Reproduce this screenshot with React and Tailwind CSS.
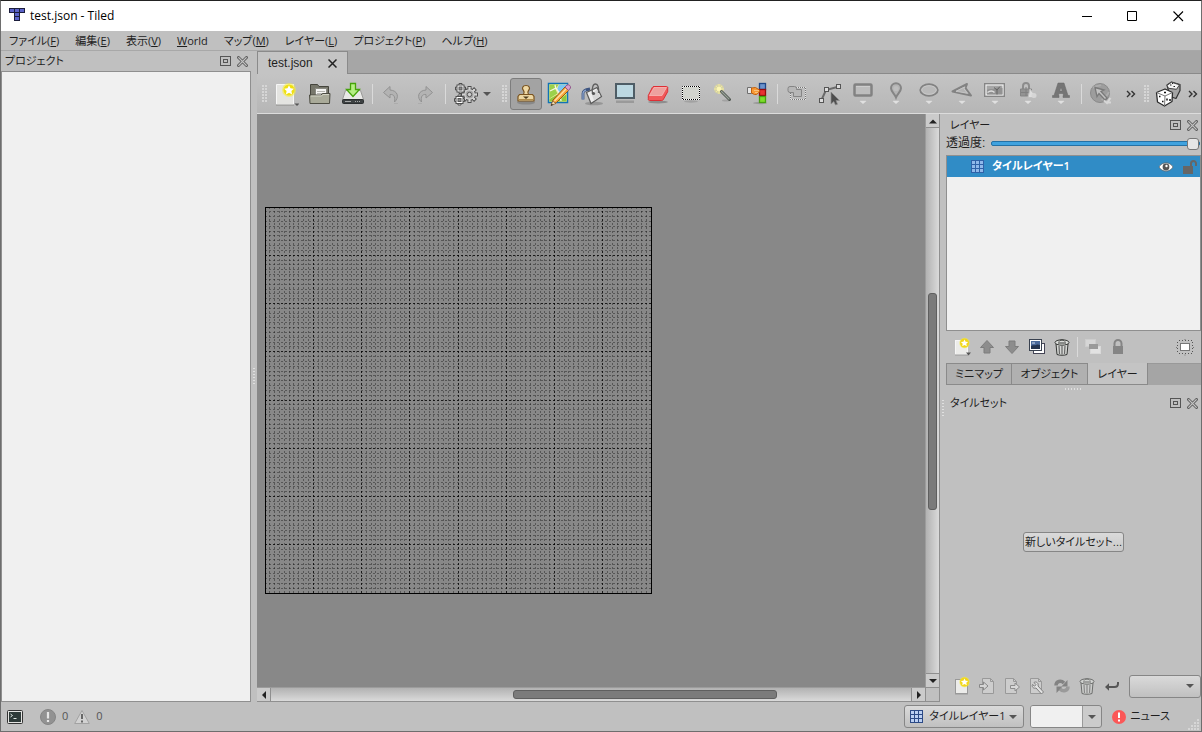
import React from "react";

const svgBase = { xmlns: "http://www.w3.org/2000/svg", "aria-hidden": true };

function Icon({ size = 24, box = 24, children, className = "" }) {
  return (
    <svg {...svgBase} width={size} height={size} viewBox={`0 0 ${box} ${box}`} fill="none" className={`shrink-0 ${className}`}>
      {children}
    </svg>
  );
}

/* ---------- Main toolbar icons (24 px grid) ---------- */

const NewMapIcon = () => (
  <Icon>
    <path d="M1.5 2.5h17v20h-17z" fill="#e4e4e1" stroke="#f6f6f6" />
    <path d="M1 23h18" stroke="#8d8d8a" />
    <circle cx="14" cy="8" r="7" fill="#f7ee3a" opacity=".55" />
    <circle cx="14" cy="8" r="5.500" fill="#f0e010" />
    <path d="M14 3.2l1.5 3.1 3.4.4-2.5 2.3.7 3.4-3.1-1.7-3.1 1.7.7-3.4-2.5-2.3 3.4-.4z" fill="#fff" />
    <path d="M19.500 21.500h5l-2.500 2.500z" fill="#555" />
  </Icon>
);

const OpenIcon = () => (
  <Icon>
    <path d="M2.5 20V2.500h7l1.500 2h9.500V20z" fill="#77776b" stroke="#45453c" />
    <path d="M7.500 6.500h11V17h-11z" fill="#f5f5f3" stroke="#8a8a82" />
    <path d="M9 9.500h8M9 11.500h8" stroke="#b5b5b0" />
    <path d="M2 21.500l-.5-8.500h11.500l1.500-1.500h7.500l-.5 10z" fill="#a9aa99" stroke="#4d4d43" />
    <path d="M3 14h10.500l1.500-1.500h6" stroke="#d2d3c5" />
  </Icon>
);

const SaveIcon = () => (
  <Icon>
    <path d="M4.500 8.500h15l3 9h-21z" fill="#e9e9e7" stroke="#9a9a98" />
    <rect x="1.500" y="17.500" width="21" height="4" rx="1" fill="#3d4142" stroke="#2b2e2f" />
    <path d="M4 19.500h6M14 19.500h1M16 19.500h1M18 19.500h1" stroke="#a6a8a8" />
    <path d="M9.500 1.500h5v6h4l-6.500 7-6.500-7h4z" fill="#b6ef84" stroke="#45a30a" strokeWidth="1.300" />
  </Icon>
);

const UndoShape = () => (
  <>
    <path d="M11 4.500L4.500 10.500l6.500 5.500v-3.500c3.500-.3 5.500 1.500 4.500 7.500 5-4.500 3.500-11.500-4.500-12z" fill="#b3b3b3" stroke="#929292" />
    <path d="M15 21.500h4" stroke="#acacac" />
  </>
);
const UndoIcon = () => <Icon><UndoShape /></Icon>;
const RedoIcon = () => <Icon><g transform="translate(25 0) scale(-1 1)"><UndoShape /></g></Icon>;

const SmallCog = ({ x, y }) => (
  <g transform={`translate(${x} ${y})`}>
    <path d="M-1.500-5h3v10h-3zM-5-1.500h10v3H-5z" fill="#e9e9e9" stroke="#4f4f4f" />
    <rect x="-3.500" y="-3.500" width="7" height="7" fill="#fff" stroke="#4f4f4f" />
    <rect x="-1.500" y="-1.500" width="3" height="3" fill="#8c8c8c" stroke="#5a5a5a" />
  </g>
);

const GearsIcon = () => (
  <Icon>
    <g transform="translate(15.500 12.500)">
      {[0, 45, 90, 135].map((a) => (
        <rect key={a} x="-1.500" y="-8" width="3" height="16" fill="#d4d4d4" stroke="#4c4c4c" transform={`rotate(${a})`} />
      ))}
      <circle r="5.800" fill="#cfcfcf" stroke="#4c4c4c" />
      {[0, 45, 90, 135].map((a) => (
        <rect key={a} x="-1" y="-7.300" width="2" height="14.600" fill="#d4d4d4" transform={`rotate(${a})`} />
      ))}
      <circle r="4" fill="#a6a6a6" />
      <circle r="2.200" fill="#cfcfcf" stroke="#555" />
    </g>
    <SmallCog x={6.500} y={6.500} />
    <SmallCog x={5.500} y={18} />
  </Icon>
);

const StampIcon = () => (
  <Icon>
    <ellipse cx="12" cy="20.500" rx="9" ry="2" fill="#6e6e6e" opacity=".5" />
    <path d="M12 3.500c-3.500 0-4.500 3-2.500 5 1 1.200.8 2.500 0 4H14.500c-.8-1.500-1-2.800 0-4 2-2 1-5-2.500-5z" fill="#efd9a5" stroke="#7a5420" strokeWidth="1.200" />
    <path d="M5.500 12.500h13l1.500 2v4.500H4v-4.500z" fill="#ecd6a2" stroke="#7a5420" strokeWidth="1.200" />
    <path d="M5 17.500h14" stroke="#b08c4c" />
    <path d="M9 14.500h6l-3 2.500z" fill="#4d3b1c" />
  </Icon>
);

const TerrainIcon = () => (
  <Icon>
    <rect x="1.500" y="1.500" width="19" height="19" fill="#f5eda2" stroke="#1173b5" strokeWidth="1.500" />
    <path d="M2.500 2.500h9l-3 5 2 4-8 5z" fill="#9bd14c" />
    <path d="M12 2.500h8v10l-4-2-4 2-2-5z" fill="#7cc8f2" />
    <path d="M2.500 17l7-4 5 3 5-4v7.500h-17z" fill="#8fc93e" />
    <path d="M3 9l6-3 4 6 1 7M8 3l1 4" stroke="#f8f6e6" strokeWidth="1.300" />
    <path d="M4.500 23l1.500-5L18 5l3.500 3.500L9.500 20.500z" fill="#f6a63c" stroke="#9a5a12" />
    <path d="M7.500 19L19 7" stroke="#fde0a8" strokeWidth="1.300" />
    <path d="M18 5l2-2c2-.8 4 1 3.500 3l-2 2.500z" fill="#d9a0cb" stroke="#92588c" />
    <path d="M4 23.500l1.700-4.500 3.200 2.500z" fill="#f2dcb4" stroke="#6b4a20" strokeWidth=".6" />
    <path d="M3.800 23.800l1-2 1.200 1.200z" fill="#222" />
  </Icon>
);

const BucketIcon = () => (
  <Icon>
    <ellipse cx="14" cy="21.500" rx="9" ry="1.800" fill="#7e7e7e" opacity=".6" />
    <path d="M3 17.500v-6c0-2.500 1.500-3.500 7-4.500" stroke="#3e5580" strokeWidth="2.800" />
    <path d="M3 17.500v-6c0-2 1.500-3 3-3.500" stroke="#90a8d0" strokeWidth="1.200" />
    <path d="M6.500 10.500L17 5.500l4.500 9L11 21.500z" fill="#ececec" stroke="#5b5b5b" strokeWidth="1.200" />
    <path d="M12 13l4.500-5.500 3.500 7-6 4z" fill="#d6d6d6" />
    <path d="M12.500 11.500c-1-5 .5-9.500 3-9.500s3.500 3.500 3 9" stroke="#606060" strokeWidth="1.300" />
    <circle cx="13.500" cy="11.500" r="1.600" fill="#555" />
  </Icon>
);

const ShapeFillIcon = () => (
  <Icon>
    <rect x="3" y="18.500" width="18" height="2.500" fill="#9a9a9a" />
    <path d="M2 1h20v16H2z" fill="#4e5d66" />
    <path d="M4 3h16v12H4z" fill="#bcd8e2" />
  </Icon>
);

const EraserIcon = () => (
  <Icon>
    <ellipse cx="12" cy="20" rx="10" ry="1.500" fill="#8d8d8d" />
    <path d="M8 4.500h12.500c1 0 1.500.8 1.200 1.700v3.500l-4.500 8c-.4.600-.8.800-1.500.8H3.500c-1 0-1.500-.8-1.200-1.700V13.500l4-8c.4-.7.900-1 1.700-1z" fill="#f05a5a" stroke="#dd2f35" />
    <path d="M8 5.500h12.500l-4.500 8H3.500z" fill="#eda19e" stroke="#f7bab7" strokeWidth=".8" />
  </Icon>
);

const SelectIcon = () => (
  <Icon>
    <ellipse cx="12" cy="19.500" rx="7" ry="1.200" fill="#a2a2a2" />
    <rect x="3.500" y="4.500" width="17" height="13" fill="#d2d4ce" stroke="#fff" />
    <rect x="3.500" y="4.500" width="17" height="13" stroke="#000" strokeDasharray="1 1" strokeDashoffset=".5" />
  </Icon>
);

const WandIcon = () => (
  <Icon>
    <ellipse cx="14" cy="18.500" rx="4" ry="1" fill="#a2a2a2" />
    <circle cx="7" cy="7" r="5" fill="#f3ea86" opacity=".45" />
    <path d="M7 2v10M2 7h10M4 4l6 6M10 4l-6 6" stroke="#f5ef9c" strokeWidth=".8" />
    <circle cx="7" cy="7" r="2.300" fill="#fbf6b4" />
    <path d="M9.500 9.500l8 8" stroke="#4d544e" strokeWidth="3" strokeLinecap="round" />
    <path d="M9.500 9.500l7.500 7.500" stroke="#97a097" strokeWidth="1.200" strokeLinecap="round" />
  </Icon>
);

const SameTileIcon = () => (
  <Icon>
    <ellipse cx="15" cy="21" rx="7" ry="1.200" fill="#9a9a9a" />
    <rect x="14.500" y="1.500" width="6" height="6" fill="#6b93cc" stroke="#1f4787" strokeWidth="1.300" />
    <rect x="14.500" y="7.500" width="6" height="6" fill="#e83232" stroke="#950c0c" strokeWidth="1.300" />
    <rect x="14.500" y="14.500" width="6" height="6" fill="#7ede2c" stroke="#47a010" strokeWidth="1.300" />
    <path d="M2.500 5.500h4v6h-4z" fill="#e6e6e6" stroke="#6f6f6f" />
    <path d="M6.500 6l4-.5 4 2.500v2l-3 2.500h-2L6.500 11z" fill="#f79a36" stroke="#c25f0c" />
    <path d="M9 8.500h5M10 10.500h3" stroke="#fbc07a" />
  </Icon>
);

const ObjectSelectIcon = () => (
  <Icon>
    <rect x="5.500" y="5.500" width="15" height="12" fill="#bdbdbd" stroke="#e4e4e4" />
    <rect x="5.500" y="5.500" width="15" height="12" stroke="#777" strokeDasharray="1 1" strokeDashoffset=".5" />
    <rect x="3" y="4.500" width="8.500" height="6" rx="2" fill="#b7b7b7" stroke="#858585" />
    <path d="M11.500 7.500h5v7h-8v-4" fill="#b7b7b7" stroke="#858585" />
  </Icon>
);

const EditPolygonIcon = () => (
  <Icon>
    <path d="M3 19L8 8l13-3.500" stroke="#6b6b6b" strokeWidth="2" />
    <rect x="1.500" y="16.500" width="4" height="4" fill="#dcdcdc" stroke="#555" />
    <rect x="6.500" y="5.500" width="4" height="4" fill="#dcdcdc" stroke="#555" />
    <rect x="18.500" y="2.500" width="4" height="4" fill="#dcdcdc" stroke="#555" />
    <path d="M13 10v12l2.800-2.500L17.500 23l2-.8-1.500-3.700h3.500z" fill="#4e4e4e" stroke="#8d8d8d" strokeWidth=".7" />
  </Icon>
);

function InsertIcon({ children }) {
  return (
    <Icon>
      <g transform="translate(0 -2)">{children}</g>
      <path d="M8 18.500h8" stroke="#a5a5a5" />
      <path d="M8 18.500h8L12 22z" fill="#e0e0e0" />
    </Icon>
  );
}

const InsertRectIcon = () => (
  <InsertIcon>
    <rect x="3.500" y="4.500" width="17" height="11" rx="1" fill="#bdbdbd" stroke="#828282" strokeWidth="2.500" />
    <path d="M5 6.500h14" stroke="#cdcdcd" />
  </InsertIcon>
);
const InsertPointIcon = () => (
  <InsertIcon>
    <path d="M12 17.500C10.500 13.500 7 11.500 7 8.300a5 5 0 0 1 10 0c0 3.200-3.500 5.200-5 9.200z" fill="#b4b4b4" stroke="#858585" strokeWidth="2" />
    <circle cx="12" cy="8.500" r="2.600" fill="#bebebe" />
  </InsertIcon>
);
const InsertEllipseIcon = () => (
  <InsertIcon>
    <ellipse cx="12" cy="10" rx="8.700" ry="5.700" fill="#bababa" stroke="#828282" strokeWidth="2" />
    <ellipse cx="12" cy="10" rx="7.300" ry="4.300" stroke="#cacaca" />
  </InsertIcon>
);
const InsertPolygonIcon = () => (
  <InsertIcon>
    <path d="M2.500 11.500L17 4l-1.500 4 5.500 7.500z" fill="#b4b4b4" stroke="#828282" strokeWidth="2" strokeLinejoin="round" />
    <path d="M6 11.300l9-4.500-1 2 3.500 4.500z" stroke="#cacaca" strokeWidth=".8" />
  </InsertIcon>
);
const InsertImageIcon = () => (
  <InsertIcon>
    <rect x="1.500" y="3.500" width="20" height="13" fill="#8e8e8e" stroke="#858585" />
    <rect x="3" y="5" width="17" height="10" fill="#a6a6a6" stroke="#efefef" strokeWidth="1.200" />
    <path d="M4 10c3-2 5 0 7.500-1.500s5-1.500 8-.5v6.500h-15.500z" fill="#929292" />
    <path d="M14 14.500V10l-3-2.500M14 10l3-3.500" stroke="#646464" />
    <path d="M4.500 12.500c2-1.500 5-2 7 0" stroke="#dedede" strokeWidth="1.500" />
  </InsertIcon>
);
const InsertTemplateIcon = () => (
  <InsertIcon>
    <path d="M7 9V6a3 3 0 0 1 6 0v3" stroke="#8c8c8c" strokeWidth="2" />
    <path d="M4.500 9h11v7h-11z" fill="#939393" stroke="#858585" />
    <path d="M10 7v9M5 12.500h10" stroke="#808080" />
    <path d="M14 9l4 5v3.500H12z" fill="#dedede" stroke="#c0c0c0" />
    <circle cx="18" cy="15.500" r="2.500" fill="#d6d6d6" />
  </InsertIcon>
);
const InsertTextIcon = () => (
  <InsertIcon>
    <path d="M9 3h6l4 12.500h1.500v2h-6.500v-2h.6l-.6-2h-4l-.6 2h.6v2H3.500v-2H5zM12 7.500l-1.300 3.500h2.600z" fill="#757575" fillRule="evenodd" stroke="#666" strokeWidth=".5" />
  </InsertIcon>
);
const WorldIcon = () => (
  <Icon>
    <circle cx="11" cy="11" r="9.500" fill="#9d9d9d" stroke="#8a8a8a" />
    <path d="M4 6c3-3 5-1 8-3M13 18c2-4 5-3 7-8" stroke="#adadad" strokeWidth="2" />
    <path d="M6 5.500l9 2.500-3 1.500 6 6.500-2 2-6-6.500L8 14.500z" fill="#c2c2c2" stroke="#7a7a7a" strokeWidth="1.300" />
    <path d="M15 18.500l3 2.500 3.500-5M17.500 20.500h4.500" stroke="#d6d6d6" strokeWidth="2" />
  </Icon>
);
const DiceIcon = () => (
  <Icon size={26} box={26}>
    <path d="M12 4l4.500-3 8.500 2.500v6l-4 8-6-2z" fill="#a4a4a4" stroke="#333" strokeWidth="1.200" strokeLinejoin="round" />
    <path d="M12 4.300l4.500-3 8 2.500-3 4.500-8-1z" fill="#f4f4f4" stroke="#444" />
    <path d="M15 4h1.500M18.500 5.500H20M17 2.500h1" stroke="#222" strokeWidth="1.200" />
    <path d="M1.500 11.500L10 8l7.500 3.500-.5 9-7.500 4.500-7-4z" fill="#fff" stroke="#2c2c2c" strokeWidth="1.300" strokeLinejoin="round" />
    <path d="M1.500 11.500l8.500 3.500 7.500-3.500M10 15l-.5 10" stroke="#777" />
    <path d="M9 11.500h2M4 15.500h1.500M7 20.500h1.500M12 17.500v2M15 18v2" stroke="#111" strokeWidth="1.500" />
  </Icon>
);

/* ---------- Dock icons (20 px grid) ---------- */

const Star = ({ x, y }) => (
  <g transform={`translate(${x} ${y})`}>
    <circle r="5.200" fill="#f7ee3a" opacity=".6" />
    <circle r="4.500" fill="#f2d71a" />
    <path d="M0-3.500l1.100 2.200 2.500.3-1.800 1.700.5 2.500L0 2-2.300 3.200l.5-2.500L-3.600-1l2.500-.3z" fill="#fff" />
  </g>
);

const DocNewIcon = ({ arrow }) => (
  <Icon size={20} box={20}>
    <rect x="3.500" y="3.500" width="12" height="14" fill="#ececea" stroke={arrow ? "#f6f6f6" : "#999"} />
    <path d="M3 18h13" stroke="#999" />
    <Star x={12.500} y={6} />
    {arrow && <path d="M14 15.500h5l-2.500 3z" fill="#555" />}
  </Icon>
);
const UpShape = () => (
  <path d="M10 3.500l6.500 7H13v5.500H7v-5.500H3.500z" fill="#8d8d8d" stroke="#7d7d7d" strokeLinejoin="round" />
);
const UpIcon = () => <Icon size={20} box={20}><UpShape /></Icon>;
const DownIcon = () => <Icon size={20} box={20}><g transform="translate(0 20) scale(1 -1)"><UpShape /></g></Icon>;
const DuplicateIcon = () => (
  <Icon size={20} box={20}>
    <rect x="6.500" y="6.500" width="11" height="10" fill="#fff" stroke="#445" />
    <rect x="2.500" y="2.500" width="12" height="11" fill="#fff" stroke="#39414f" />
    <rect x="4" y="4" width="9" height="8" fill="#4a6a9c" />
    <path d="M4 9c2-1.500 3 0 5-1s3 0 4 0v4H4z" fill="#23334f" />
    <path d="M5 6h3" stroke="#cfdcf0" />
  </Icon>
);
const TrashIcon = ({ dim }) => (
  <Icon size={20} box={20} className={dim ? "opacity-60" : ""}>
    <path d="M4 7l1 10.500c2.500 1 7.500 1 10 0L16 7z" fill="#d5d7d4" stroke="#343634" />
    <path d="M7 9l.5 8M10 9v8.500M13 9l-.5 8" stroke="#666" strokeWidth="1.200" />
    <ellipse cx="10" cy="5.500" rx="7" ry="2.700" fill="#dcdedb" stroke="#343634" />
    <path d="M7 4.500c1.500-2 4.500-2 6 0M6 6h8" stroke="#343634" />
  </Icon>
);
const GroupIcon = () => (
  <Icon size={20} box={20}>
    <rect x="2.500" y="2.500" width="10" height="7" fill="#d6d6d6" stroke="#cdcdcd" />
    <rect x="7.500" y="9.500" width="10" height="7" fill="#e2e2e2" stroke="#d9d9d9" />
    <rect x="6" y="7" width="9" height="5" fill="#9a9a9a" />
  </Icon>
);
const LockIcon = () => (
  <Icon size={20} box={20}>
    <path d="M6.500 9V6.500a3.500 3.500 0 0 1 7 0V9" stroke="#858585" strokeWidth="2" />
    <rect x="5" y="9" width="10" height="8" fill="#858585" />
  </Icon>
);
const HighlightIcon = () => (
  <Icon size={20} box={20}>
    <rect x="5.500" y="6.500" width="9" height="7" fill="#fff" stroke="#777" />
    <path d="M4 3.500h13M4 16.500h13" stroke="#555" strokeDasharray="1 2" />
    <path d="M2.500 5v12M17.500 5v12" stroke="#555" strokeDasharray="1 2" />
    <path d="M10 2v1M10 17.500v1M1 10.500h1M18 10.500h1" stroke="#777" />
  </Icon>
);
const DocShape = () => (
  <>
    <path d="M5.500 2.500h8l3 3v12h-11z" fill="#cdcdcd" stroke="#999" />
    <path d="M13.500 2.500v3h3" stroke="#999" />
  </>
);
const ImportIcon = () => (
  <Icon size={20} box={20}><DocShape />
    <path d="M2.500 8.500h4v-2.500l4.500 4-4.500 4v-2.500h-4z" fill="#d5d5d5" stroke="#888" />
  </Icon>
);
const ExportIcon = () => (
  <Icon size={20} box={20}>
    <g transform="translate(-2 0)"><DocShape /></g>
    <path d="M8.500 9.500h4.500v-2.500l4.500 4-4.500 4v-2.500h-4.500z" fill="#d8d8d8" stroke="#8c8c8c" />
  </Icon>
);
const EditTilesetIcon = () => (
  <Icon size={20} box={20}>
    <g transform="translate(-2 0)"><DocShape /></g>
    <path d="M7 6.500c2-1.500 5 .5 4 3.500l5.500 6-2 2-5.500-6c-2.500.8-4.500-1-3.500-3.500l2 1.700 1.500-1.500z" fill="#e3e3e3" stroke="#7e7e7e" />
  </Icon>
);
const ReplaceIcon = () => (
  <Icon size={20} box={20}>
    <path d="M4 9.500C4 5 9 4 12 7" stroke="#838383" strokeWidth="3.500" />
    <path d="M9.500 10.500L15.500 4v6.500z" fill="#838383" />
    <path d="M16 10.500c0 4.500-5 5.500-8 2.500" stroke="#9a9a9a" strokeWidth="3.500" />
    <path d="M10.500 10.500l-6 6.500v-6.500z" fill="#838383" />
  </Icon>
);
const ReturnIcon = () => (
  <Icon size={20} box={20}>
    <path d="M16 6v1.500c0 2.500-1 3.500-3.500 3.500H5" stroke="#555" strokeWidth="2" />
    <path d="M3 11l4-3.700v7.400z" fill="#555" />
  </Icon>
);

const GridIcon = ({ dark }) => (
  <Icon size={14} box={14}>
    <rect x=".5" y=".5" width="12" height="12" fill={dark ? "#bcd0f2" : "#8fb8ea"} stroke={dark ? "#2c4a86" : "#2f62a8"} />
    <path d="M4.500 0v13M8.500 0v13M0 4.500h13M0 8.500h13" stroke={dark ? "#2c4a86" : "#2f62a8"} />
  </Icon>
);

const FloatIcon = () => (
  <Icon size={11} box={11}>
    <rect x=".5" y=".5" width="10" height="9" stroke="#555" />
    <rect x="3.500" y="3.500" width="4" height="3" stroke="#555" />
  </Icon>
);
const DockCloseIcon = () => (
  <Icon size={11} box={11}>
    <path d="M1.500 1.500l8 8M9.500 1.500l-8 8" stroke="#606060" strokeWidth="3" strokeLinecap="round" />
    <path d="M1.700 1.700l7.600 7.600M9.300 1.700l-7.600 7.600" stroke="#c6c6c6" strokeWidth="1.200" strokeLinecap="round" />
  </Icon>
);

const Triangle = ({ dir, className = "" }) => {
  const d = { up: "M0 6.500l4-4 4 4z", down: "M0 2h8L4 6z", left: "M6 0L2 4l4 4z", right: "M2 0l4 4-4 4z" }[dir];
  return (
    <svg {...svgBase} width="8" height="8" viewBox="0 0 8 8" className={`shrink-0 ${className}`}>
      <path d={d} fill="currentColor" />
    </svg>
  );
};

const Overflow = () => (
  <Icon size={10} box={10}>
    <path d="M1 2l3 3-3 3M5.500 2l3 3-3 3" stroke="#333" strokeWidth="1.400" />
  </Icon>
);

const Handle = ({ className }) => (
  <span className={`flex shrink-0 items-center ${className}`}>
    <svg {...svgBase} width="6" height="18" viewBox="0 0 6 18">
      {[0, 3, 6, 9, 12, 15].map((y) =>
        [0, 3].map((x) => <rect key={`${x}-${y}`} x={x} y={y} width="2" height="2" fill="#d6d6d6" />)
      )}
    </svg>
  </span>
);

const Sep = ({ className = "" }) => (
  <span className={`flex h-5 shrink-0 justify-center ${className}`}>
    <span className="w-px bg-[#dadada]" />
  </span>
);

/* ---------- Pieces ---------- */

function ToolButton({ label, icon: I, active, disabled }) {
  return (
    <button
      type="button"
      aria-label={label}
      disabled={disabled}
      className={`flex h-8 w-8 shrink-0 items-center justify-center rounded-[3px] ${active ? "border border-[#7d7d7d] bg-[#a3a3a3]" : ""}`}
    >
      <I />
    </button>
  );
}

function SmallButton({ label, children, disabled }) {
  return (
    <button type="button" aria-label={label} disabled={disabled} className="flex h-6 w-[25px] shrink-0 items-center justify-center">
      {children}
    </button>
  );
}

function DockHeader({ title }) {
  return (
    <header className="flex h-5 shrink-0 items-center gap-[6px] pr-[3px] pl-1 font-['Open_Sans','Noto_Sans_CJK_JP',sans-serif] text-[11px] leading-5">
      <h2 className="flex-1 truncate">{title}</h2>
      <button type="button" aria-label={`${title} を切り離す`}><FloatIcon /></button>
      <button type="button" aria-label={`${title} を閉じる`}><DockCloseIcon /></button>
    </header>
  );
}

const menus = [
  ["ファイル", "F"],
  ["編集", "E"],
  ["表示", "V"],
  ["World"],
  ["マップ", "M"],
  ["レイヤー", "L"],
  ["プロジェクト", "P"],
  ["ヘルプ", "H"],
];

const tileTools = [
  ["スタンプブラシ", StampIcon],
  ["地形ブラシ", TerrainIcon],
  ["塗りつぶし", BucketIcon],
  ["図形塗りつぶし", ShapeFillIcon],
  ["消しゴム", EraserIcon],
  ["矩形選択", SelectIcon],
  ["自動選択", WandIcon],
  ["同じタイルを選択", SameTileIcon],
];

const objectTools = [
  ["オブジェクトを選択", ObjectSelectIcon],
  ["ポリゴンを編集", EditPolygonIcon],
  ["四角形を挿入", InsertRectIcon],
  ["点を挿入", InsertPointIcon],
  ["楕円を挿入", InsertEllipseIcon],
  ["ポリゴンを挿入", InsertPolygonIcon],
  ["タイルを挿入", InsertImageIcon],
  ["テンプレートを挿入", InsertTemplateIcon],
  ["テキストを挿入", InsertTextIcon],
];

function TitleBar() {
  return (
    <div className="flex h-[30px] shrink-0 items-center bg-white pl-2 font-['Open_Sans','Noto_Sans_CJK_JP',sans-serif] text-[12px] text-black">
      <svg {...svgBase} width="16" height="16" viewBox="0 0 16 16" className="mr-[5px]">
        {[[0, 0], [5, 0], [10, 0], [5, 4], [5, 8]].map(([x, y]) => (
          <rect key={`${x}-${y}`} x={x + 0.5} y={y + 0.5} width="5" height="4" fill="#5b63c9" stroke="#1c1e3c" />
        ))}
      </svg>
      <h1 className="flex-1">test.json - Tiled</h1>
      <button type="button" aria-label="最小化" className="flex h-full w-[46px] items-center justify-center">
        <Icon size={11} box={11}><path d="M0 5.500h10" stroke="#000" /></Icon>
      </button>
      <button type="button" aria-label="最大化" className="flex h-full w-[45px] items-center justify-center">
        <Icon size={11} box={11}><path d="M.5.500h9v9H.500z" stroke="#000" /></Icon>
      </button>
      <button type="button" aria-label="閉じる" className="flex h-full w-[46px] items-center justify-center">
        <Icon size={11} box={11}><path d="M.5.500l9.500 9.500M10 .500L.500 10" stroke="#000" strokeWidth="1.100" /></Icon>
      </button>
    </div>
  );
}

function Toolbar() {
  return (
    <div className="flex h-10 shrink-0 items-center gap-px overflow-hidden border-b border-[#dcdcdc] bg-linear-to-b from-[#c4c4c4] to-[#b6b6b6] pl-px">
      <Handle className="w-3 pl-1" />
      <ToolButton label="新規マップ" icon={NewMapIcon} />
      <ToolButton label="開く" icon={OpenIcon} />
      <ToolButton label="保存" icon={SaveIcon} />
      <Sep className="w-1" />
      <ToolButton label="元に戻す" icon={UndoIcon} disabled />
      <ToolButton label="やり直す" icon={RedoIcon} disabled />
      <Sep className="w-2" />
      <button type="button" aria-label="コマンドを実行" className="flex h-8 w-[45px] shrink-0 items-center gap-[5px] pl-1">
        <GearsIcon />
        <Triangle dir="down" className="text-[#555]" />
      </button>
      <Handle className="w-[13px] pl-[6px]" />
      {tileTools.map(([label, icon], i) => (
        <ToolButton key={label} label={label} icon={icon} active={i === 0} />
      ))}
      <Sep className="w-[6px]" />
      {objectTools.map(([label, icon]) => (
        <ToolButton key={label} label={label} icon={icon} disabled />
      ))}
      <Sep className="w-[6px]" />
      <ToolButton label="ワールドツール" icon={WorldIcon} disabled />
      <button type="button" aria-label="その他のツール" className="flex h-8 w-[22px] shrink-0 items-center justify-center pl-[3px]"><Overflow /></button>
      <Handle className="w-[10px] pl-[3px]" />
      <ToolButton label="ランダムモード" icon={DiceIcon} />
      <button type="button" aria-label="その他のオプション" className="flex h-8 w-4 shrink-0 items-center justify-center"><Overflow /></button>
    </div>
  );
}

const CELLS = 80;
const MAP_SIZE = 387;

function MapGrid() {
  const lines = Array.from({ length: CELLS - 1 }, (_, i) => {
    const n = i + 1;
    return { pos: Math.floor((n * (MAP_SIZE - 1)) / CELLS) + 0.5, major: n % 10 === 0 };
  });
  return (
    <svg {...svgBase} width={MAP_SIZE} height={MAP_SIZE} viewBox={`0 0 ${MAP_SIZE} ${MAP_SIZE}`} shapeRendering="crispEdges" className="absolute top-[93px] left-2">
      {lines.map(({ pos, major }) => (
        <path
          key={pos}
          d={`M${pos} 0V${MAP_SIZE}M0 ${pos}H${MAP_SIZE}`}
          stroke="#000"
          strokeOpacity={major ? 0.8 : 0.36}
          strokeDasharray="2 2"
        />
      ))}
      <rect x=".5" y=".5" width={MAP_SIZE - 1} height={MAP_SIZE - 1} fill="none" stroke="#000" />
    </svg>
  );
}

function MapView() {
  return (
    <div className="grid min-w-0 flex-1 grid-cols-[1fr_14px] grid-rows-[1fr_14px] border-r border-b border-[#8f8f8f]">
      <div className="relative overflow-hidden bg-[#888888]">
        <MapGrid />
      </div>
      <div className="flex flex-col border-l border-[#9c9c9c] bg-linear-to-r from-[#b2b2b2] to-[#dadada] text-[#222]">
        <button type="button" aria-label="上へスクロール" className="flex h-[14px] items-center justify-center border-b border-[#8f8f8f] bg-[#cbcbcb]"><Triangle dir="up" /></button>
        <div className="grow-[166]" />
        <div className="mx-[2px] grow-[215] rounded-[3px] border border-[#5f5f5f] bg-[#7b7b7b]" />
        <div className="grow-[164]" />
        <button type="button" aria-label="下へスクロール" className="flex h-[14px] items-center justify-center border-t border-[#8f8f8f] bg-[#cbcbcb]"><Triangle dir="down" /></button>
      </div>
      <div className="flex border-t border-[#9c9c9c] bg-linear-to-b from-[#b2b2b2] to-[#dadada] text-[#222]">
        <button type="button" aria-label="左へスクロール" className="flex w-[14px] items-center justify-center border-r border-[#8f8f8f] bg-[#cbcbcb]"><Triangle dir="left" /></button>
        <div className="grow-[243]" />
        <div className="my-[2px] grow-[263] rounded-[3px] border border-[#5f5f5f] bg-[#7b7b7b]" />
        <div className="grow-[135]" />
        <button type="button" aria-label="右へスクロール" className="flex w-[14px] items-center justify-center border-l border-[#8f8f8f] bg-[#cbcbcb]"><Triangle dir="right" /></button>
      </div>
      <div className="border-t border-l border-[#8f8f8f] bg-[#c0c0c0]" />
    </div>
  );
}

function LayerDock() {
  return (
    <section className="flex flex-col">
      <DockHeader title="レイヤー" />
      <div className="flex h-4 items-center gap-[6px] pr-px">
        <label htmlFor="opacity" className="shrink-0 text-[12px] leading-4">透過度:</label>
        <input
          id="opacity"
          type="range"
          defaultValue="100"
          className="h-3 min-w-0 flex-1 appearance-none bg-transparent [&::-webkit-slider-runnable-track]:h-[5px] [&::-webkit-slider-runnable-track]:rounded-[2px] [&::-webkit-slider-runnable-track]:border [&::-webkit-slider-runnable-track]:border-[#2471a5] [&::-webkit-slider-runnable-track]:bg-[#3fa2df] [&::-webkit-slider-thumb]:-mt-1 [&::-webkit-slider-thumb]:h-3 [&::-webkit-slider-thumb]:w-3 [&::-webkit-slider-thumb]:appearance-none [&::-webkit-slider-thumb]:rounded-[3px] [&::-webkit-slider-thumb]:border [&::-webkit-slider-thumb]:border-[#777] [&::-webkit-slider-thumb]:bg-[#e6e6e6]"
        />
      </div>
      <ul className="mt-1 h-[176px] border border-[#8f8f8f] bg-[#f0f0f0]">
        <li className="flex h-[21px] items-center bg-[#308cc6] pr-[3px] pl-6 font-['Open_Sans','Noto_Sans_CJK_JP',sans-serif] text-[11px] font-semibold text-white">
          <GridIcon />
          <span className="ml-[7px] flex-1">タイルレイヤー1</span>
          <button type="button" aria-label="表示" className="mr-[9px]">
            <svg {...svgBase} width="16" height="12" viewBox="0 0 16 12">
              <path d="M1 6c3-5.500 11-5.500 14 0-3 5.500-11 5.500-14 0z" fill="#fff" stroke="#5f5f5f" strokeWidth=".7" />
              <circle cx="8" cy="6" r="3.400" fill="#555" />
              <circle cx="8.500" cy="5" r="1.200" fill="#fff" />
            </svg>
          </button>
          <button type="button" aria-label="ロック">
            <svg {...svgBase} width="14" height="15" viewBox="0 0 14 15" fill="none">
              <path d="M8 8V4.500a2.500 2.500 0 0 1 5 0V7" stroke="#666" strokeWidth="2" />
              <rect y="7" width="10" height="8" fill="#666" />
            </svg>
          </button>
        </li>
      </ul>
      <div className="flex h-8 items-center pl-[3px]">
        <SmallButton label="新規レイヤー"><DocNewIcon arrow /></SmallButton>
        <SmallButton label="レイヤーを上げる" disabled><UpIcon /></SmallButton>
        <SmallButton label="レイヤーを下げる" disabled><DownIcon /></SmallButton>
        <SmallButton label="レイヤーを複製"><DuplicateIcon /></SmallButton>
        <SmallButton label="レイヤーを削除"><TrashIcon /></SmallButton>
        <Sep className="h-3 w-[6px]" />
        <SmallButton label="他のレイヤーを表示" disabled><GroupIcon /></SmallButton>
        <SmallButton label="他のレイヤーをロック" disabled><LockIcon /></SmallButton>
        <span className="flex-1" />
        <SmallButton label="現在のレイヤーを強調"><HighlightIcon /></SmallButton>
        <span className="w-1" />
      </div>
      <div role="tablist" className="flex h-[22px] bg-[#a5a5a5] text-[11px] leading-5">
        <button type="button" role="tab" aria-selected="false" className="w-[66px] border border-[#8a8a8a] bg-[#b0b0b0]">ミニマップ</button>
        <button type="button" role="tab" aria-selected="false" className="w-[75px] border-y border-[#8a8a8a] bg-[#b0b0b0]">オブジェクト</button>
        <button type="button" role="tab" aria-selected="true" className="w-[61px] border-x border-b border-[#8a8a8a] bg-[#c4c4c4]">レイヤー</button>
        <span className="flex-1 border-t border-[#999]" />
      </div>
    </section>
  );
}

function TilesetDock() {
  return (
    <section className="flex min-h-0 flex-1 flex-col">
      <DockHeader title="タイルセット" />
      <div className="flex flex-1 items-center justify-center">
        <button type="button" className="h-5 rounded-[3px] border border-[#868686] bg-linear-to-b from-[#dadada] to-[#c9c9c9] px-px text-[11px] leading-4">新しいタイルセット...</button>
      </div>
      <div className="flex h-8 items-center pl-[3px]">
        <SmallButton label="新規タイルセット"><DocNewIcon /></SmallButton>
        <SmallButton label="インポート" disabled><ImportIcon /></SmallButton>
        <SmallButton label="エクスポート" disabled><ExportIcon /></SmallButton>
        <SmallButton label="タイルセットを編集" disabled><EditTilesetIcon /></SmallButton>
        <SmallButton label="置き換え" disabled><ReplaceIcon /></SmallButton>
        <SmallButton label="削除" disabled><TrashIcon dim /></SmallButton>
        <SmallButton label="折り返し"><ReturnIcon /></SmallButton>
        <span className="flex-1" />
        <Combo label="表示倍率" className="w-[72px]" />
      </div>
    </section>
  );
}

function Combo({ label, className = "", children, icon, padding = "pl-2" }) {
  return (
    <span className={`relative flex h-[23px] shrink-0 items-center ${className}`}>
      <select aria-label={label} className={`h-full w-full appearance-none rounded-[3px] border border-[#868686] bg-linear-to-b from-[#dadada] to-[#c0c0c0] ${padding}`}>
        {children}
      </select>
      {icon && <span className="pointer-events-none absolute left-[6px]">{icon}</span>}
      <Triangle dir="down" className="pointer-events-none absolute right-[7px] text-[#555]" />
    </span>
  );
}

function StatusBar() {
  return (
    <footer className="flex h-[29px] shrink-0 items-center pl-1 font-['Open_Sans','Noto_Sans_CJK_JP',sans-serif] text-[11px]">
      <button type="button" aria-label="コンソール" className="ml-[2px]">
        <svg {...svgBase} width="16" height="14" viewBox="0 0 16 14" fill="none">
          <rect x=".5" y=".5" width="15" height="13" rx="1" fill="#e4e4e2" stroke="#333" />
          <rect x="2" y="2" width="12" height="10" fill="#2e3a38" />
          <path d="M3.500 4l2 1.500-2 1.500M6.500 8.500h3" stroke="#dfe6e2" />
        </svg>
      </button>
      <button type="button" className="ml-[17px] flex items-center gap-[6px] text-[#555]">
        <Icon size={16} box={16}>
          <circle cx="8" cy="8" r="7.500" fill="#929292" stroke="#858585" />
          <path d="M8 3v6.500M8 11v2" stroke="#e6e6e6" strokeWidth="2.200" />
        </Icon>
        0
      </button>
      <button type="button" className="ml-[6px] flex items-center gap-[6px] text-[#555]">
        <Icon size={16} box={16}>
          <path d="M8 1.500l7.300 13H.700z" fill="#d2d2d2" stroke="#a2a2a2" strokeLinejoin="round" />
          <path d="M8 5v5M8 11.500v2" stroke="#666" strokeWidth="2" />
        </Icon>
        0
      </button>
      <span className="flex-1" />
      <Combo label="現在のレイヤー" className="mr-[6px] w-[120px]" padding="pl-6" icon={<GridIcon dark />}>
        <option>タイルレイヤー1</option>
      </Combo>
      <span className="relative mr-[9px] flex h-[23px] w-[72px] items-center rounded-[3px] border border-[#868686] bg-[#cbcbcb]">
        <input aria-label="ズーム" className="h-full w-[52px] rounded-l-[2px] border-r border-[#999] bg-[#f0f0f0] px-1" />
        <button type="button" aria-label="ズームを選択" className="flex flex-1 justify-center"><Triangle dir="down" className="text-[#555]" /></button>
      </span>
      <button type="button" className="mr-[18px] flex items-center gap-[3px]">
        <Icon size={16} box={16}>
          <circle cx="8" cy="8" r="7" fill="#fb5757" />
          <path d="M8 3.500v5.500M8 10.500v2" stroke="#fff" strokeWidth="2" />
        </Icon>
        ニュース
      </button>
      <span className="mr-px self-end">
        <svg {...svgBase} width="12" height="12" viewBox="0 0 12 12">
          {[[9, 0], [9, 3], [6, 3], [9, 6], [6, 6], [3, 6], [9, 9], [6, 9], [3, 9], [0, 9]].map(([x, y]) => (
            <rect key={`${x}-${y}`} x={x} y={y} width="2" height="2" fill="#d6d6d6" />
          ))}
        </svg>
      </span>
    </footer>
  );
}

export default function App() {
  return (
    <div className="flex h-screen flex-col border border-[#6e6e6e] border-t-[#222] bg-[#c0c0c0] font-['Liberation_Sans','Noto_Sans_CJK_JP',sans-serif] text-[#1e1e1e] [font-feature-settings:'palt']">
      <TitleBar />
      <nav className="flex h-5 shrink-0 items-center gap-4 border-b border-[#a8a8a8] pl-2 font-['Open_Sans','Noto_Sans_CJK_JP',sans-serif] text-[11px] leading-5">
        {menus.map(([name, key]) => (
          <button key={name} type="button" className="shrink-0">
            {key ? <>{name}(<u>{key}</u>)</> : <><u>W</u>orld</>}
          </button>
        ))}
      </nav>
      <div className="flex min-h-0 flex-1">
        <section className="flex w-[250px] shrink-0 flex-col">
          <DockHeader title="プロジェクト" />
          <div className="flex-1 border border-[#8f8f8f] bg-[#f0f0f0]" />
        </section>
        <div className="flex w-[6px] shrink-0 items-center justify-center">
          <svg {...svgBase} width="2" height="17" viewBox="0 0 2 17">
            {[0, 3, 6, 9, 12, 15].map((y) => <rect key={y} y={y} width="2" height="1" fill="#e0e0e0" />)}
          </svg>
        </div>
        <main className="flex min-w-0 flex-1 flex-col">
          <div className="flex h-[23px] shrink-0 bg-[#a6a6a6]">
            <div className="flex w-[91px] items-center justify-between border-t border-r border-l border-[#8a8a8a] bg-[#c4c4c4] pr-[10px] pl-[10px] text-[12px]">
              <span>test.json</span>
              <button type="button" aria-label="タブを閉じる">
                <Icon size={9} box={9}><path d="M.5.500l8 8M8.500.500l-8 8" stroke="#222" strokeWidth="1.500" /></Icon>
              </button>
            </div>
            <div className="flex-1 border-b border-[#8a8a8a]" />
          </div>
          <Toolbar />
          <div className="flex min-h-0 flex-1">
            <MapView />
            <aside className="flex w-[261px] shrink-0 pt-px">
              <div className="flex w-[6px] shrink-0 items-center justify-center">
                <svg {...svgBase} width="2" height="17" viewBox="0 0 2 17">
                  {[0, 3, 6, 9, 12, 15].map((y) => <rect key={y} y={y} width="2" height="1" fill="#e0e0e0" />)}
                </svg>
              </div>
              <div className="flex min-w-0 flex-1 flex-col">
                <LayerDock />
                <div className="flex h-2 items-center justify-center">
                  <svg {...svgBase} width="17" height="2" viewBox="0 0 17 2">
                    {[0, 3, 6, 9, 12, 15].map((x) => <rect key={x} x={x} width="1" height="2" fill="#e0e0e0" />)}
                  </svg>
                </div>
                <TilesetDock />
              </div>
            </aside>
          </div>
        </main>
      </div>
      <StatusBar />
    </div>
  );
}
